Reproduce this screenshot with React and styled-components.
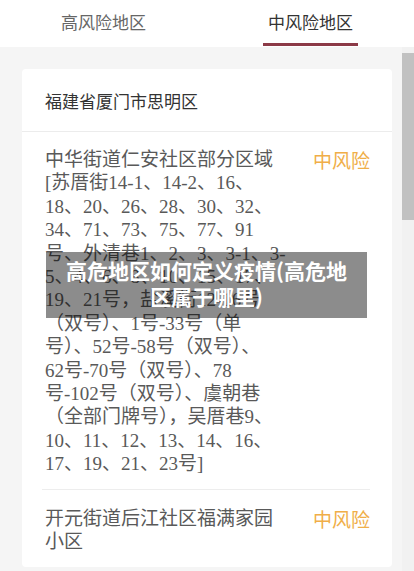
import React, {useState} from 'react'
import styled, {createGlobalStyle} from 'styled-components'

const GlobalStyle = createGlobalStyle`
	html, body {
		margin: 0;
		padding: 0;
		background: #f5f5f5;
	}
	body {
		font-family: "Noto Sans CJK SC", "Noto Sans", sans-serif;
	}
`

const Page = styled.div`
	position: relative;
	width: 414px;
	height: 571px;
	overflow: hidden;
	display: flex;
	flex-direction: column;
`

const TabBar = styled.div`
	display: flex;
	height: 47px;
	background: #fff;
	flex-shrink: 0;
`

const Tab = styled.div`
	flex: 1;
	display: flex;
	justify-content: center;
	cursor: pointer;
`

const TabLabel = styled.span`
	box-sizing: border-box;
	height: 46px;
	padding: 9px 5px 0;
	font-size: 17px;
	line-height: 25px;
	color: ${p => p.active ? '#333' : '#666'};
	border-bottom: 3px solid ${p => p.active ? '#8c3a47' : 'transparent'};
`

const Body = styled.div`
	flex: 1;
	display: flex;
	min-height: 0;
`

const Content = styled.div`
	flex: 1;
	padding: 22px 10px 0 22px;
	overflow: hidden;
`

const Card = styled.div`
	background: #fff;
	border-radius: 4px;
`

const CardHeader = styled.div`
	height: 62px;
	padding-left: 23px;
	display: flex;
	align-items: center;
	font-size: 17px;
	color: #333;
	border-bottom: 1px solid #ececec;
`

const Item = styled.div`
	display: flex;
	align-items: flex-start;
	padding: ${p => p.first ? '16px' : '17px'} 22px 13px 23px;
	& + & {
		border-top: 1px solid #ededed;
		margin: 0 22px 0 20px;
		padding-left: 3px;
		padding-right: 0;
	}
`

const Place = styled.div`
	width: 240px;
	font-family: "Liberation Serif", "Noto Sans CJK SC", serif;
	font-size: 19px;
	line-height: 23.4px;
	color: #595959;
	white-space: nowrap;
`

const Level = styled.span`
	margin-left: auto;
	font-size: 19px;
	line-height: 23.4px;
	color: #f0ae48;
`

const Scrollbar = styled.div`
	width: 12px;
	background: #f1f1f1;
	padding-top: 6px;
`

const Thumb = styled.div`
	height: 167px;
	background: #c1c1c1;
`

const Caption = styled.div`
	position: absolute;
	left: 46px;
	top: 252px;
	width: 321px;
	height: 66px;
	box-sizing: border-box;
	padding: 5px 16px 0;
	background: rgba(0, 0, 0, 0.45);
	color: #fff;
	font-size: 21px;
	font-weight: bold;
	line-height: 26px;
	text-align: center;
`

const places = [
	{
		name: [
			'中华街道仁安社区部分区域',
			'[苏厝街14-1、14-2、16、',
			'18、20、26、28、30、32、',
			'34、71、73、75、77、91',
			'号、外清巷1、2、3、3-1、3-',
			'5、4、6、8、10、15、17、',
			'19、21号，盐溪街12-16号',
			'（双号）、1号-33号（单',
			'号）、52号-58号（双号）、',
			'62号-70号（双号）、78',
			'号-102号（双号）、虞朝巷',
			'（全部门牌号），吴厝巷9、',
			'10、11、12、13、14、16、',
			'17、19、21、23号]',
		],
		level: '中风险',
	},
	{
		name: ['开元街道后江社区福满家园', '小区'],
		level: '中风险',
	},
]

function App() {
	let [tab, setTab] = useState(1)

	return (
		<Page>
			<GlobalStyle />
			<TabBar>
				{['高风险地区', '中风险地区'].map((t, i) => (
					<Tab key={t} onClick={() => setTab(i)}>
						<TabLabel active={tab === i}>{t}</TabLabel>
					</Tab>
				))}
			</TabBar>
			<Body>
				<Content>
					<Card>
						<CardHeader>福建省厦门市思明区</CardHeader>
						{places.map((p, i) => (
							<Item key={i} first={i === 0}>
								<Place>
									{p.name.map((line, j) => (
										<React.Fragment key={j}>{line}{j < p.name.length - 1 && <br />}</React.Fragment>
									))}
								</Place>
								<Level>{p.level}</Level>
							</Item>
						))}
					</Card>
				</Content>
				<Scrollbar>
					<Thumb />
				</Scrollbar>
			</Body>
			<Caption>高危地区如何定义疫情(高危地区属于哪里)</Caption>
		</Page>
	)
}

export default App
